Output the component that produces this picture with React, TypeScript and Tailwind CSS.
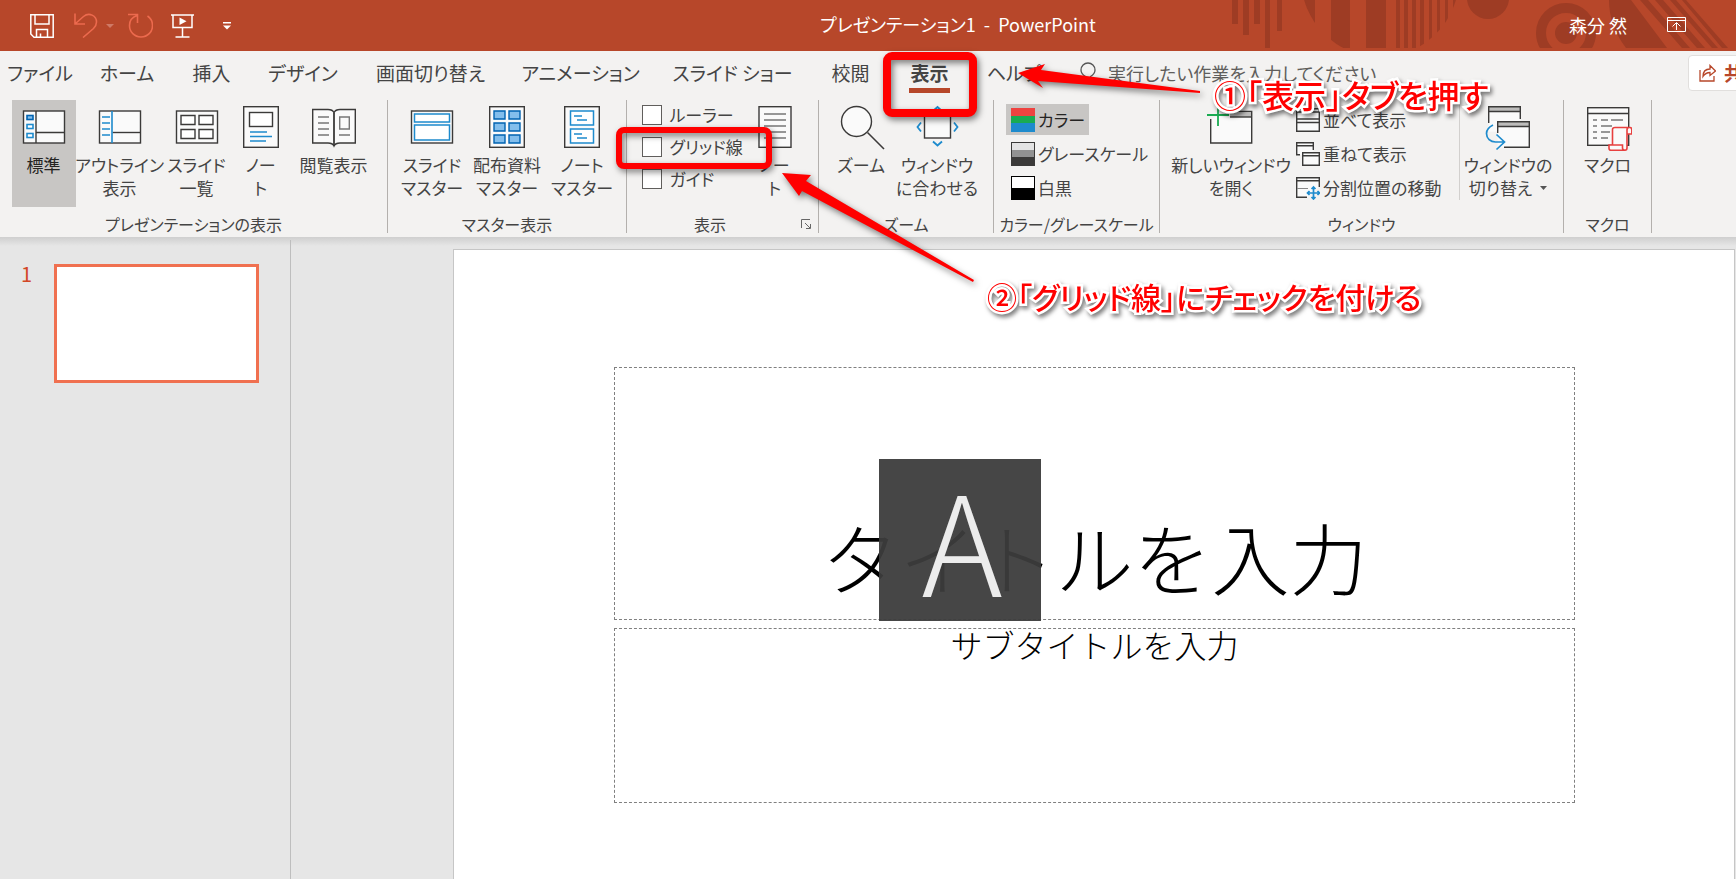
import { useState, type ReactNode } from "react";

const TABS = [
  { label: "ファイル", width: "w-[80px]" },
  { label: "ホーム", width: "w-[94px]" },
  { label: "挿入", width: "w-[75px]" },
  { label: "デザイン", width: "w-[108px]" },
  { label: "画面切り替え", width: "w-[147px]" },
  { label: "アニメーション", width: "w-[153px]" },
  { label: "スライド ショー", width: "w-[151px]" },
  { label: "校閲", width: "w-[85px]" },
  { label: "表示", width: "w-[73px]" },
  { label: "ヘルプ", width: "w-[96px]" },
];

const INK = "#3b3a39";
const BLUE = "#1e8bcd";

const Icon = ({ children }: { children: ReactNode }) => (
  <svg width="48" height="48" viewBox="0 0 48 48" fill="none" className="shrink-0">
    {children}
  </svg>
);

const SmallIcon = ({ children }: { children: ReactNode }) => (
  <svg width="24" height="24" viewBox="0 0 24 24" fill="none" className="shrink-0">
    {children}
  </svg>
);

const NormalIcon = () => (
  <Icon>
    <rect x="3.5" y="8" width="41" height="32" fill="#fafafa" stroke={INK} strokeWidth="1.4" />
    <path d="M16 8v32M16 29.500h28.500" stroke={INK} strokeWidth="1.4" />
    <rect x="7" y="12.500" width="6" height="4" fill="#83beec" stroke="#0063b1" strokeWidth="1.600" />
    <rect x="7" y="21.500" width="6" height="4" fill="#fff" stroke={BLUE} strokeWidth="1.600" />
    <rect x="7" y="30.500" width="6" height="4" fill="#fff" stroke={BLUE} strokeWidth="1.600" />
  </Icon>
);

const OutlineIcon = () => (
  <Icon>
    <rect x="3.500" y="8" width="41" height="32" fill="#fafafa" stroke={INK} strokeWidth="1.400" />
    <path d="M16.500 29.500h28" stroke={INK} strokeWidth="1.400" />
    <path d="M16 8v32M6 14h8M6 20h8M6 26h8M6 32h8" stroke={BLUE} strokeWidth="1.600" />
  </Icon>
);

const SorterIcon = () => (
  <Icon>
    <rect x="3.500" y="8" width="41" height="32" fill="#fafafa" stroke={INK} strokeWidth="1.400" />
    <path
      d="M8 12.500h14v9H8zM26 12.500h14v9H26zM8 26.500h14v9H8zM26 26.500h14v9H26z"
      fill="#fff"
      stroke={INK}
      strokeWidth="1.400"
    />
  </Icon>
);

const NotesIcon = () => (
  <Icon>
    <rect x="6.700" y="3.700" width="34.600" height="40.600" fill="#fafafa" stroke={INK} strokeWidth="1.400" />
    <rect x="12.500" y="9.500" width="23" height="14" fill="#fff" stroke={INK} strokeWidth="1.400" />
    <path d="M13 29h17M13 33.500h22M13 38h16" stroke={BLUE} strokeWidth="1.600" />
  </Icon>
);

const BookIcon = () => (
  <Icon>
    <path
      d="M2.700 6.500H18c3 0 5 1 6 3 1-2 3-3 6-3h15.300v33.500H30c-3 0-5 .8-6 3-1-2.200-3-3-6-3H2.700z"
      fill="#fafafa"
      stroke={INK}
      strokeWidth="1.400"
    />
    <path d="M24 9.500v33" stroke={INK} strokeWidth="1.800" />
    <path d="M8 14h11M8 20h11M8 26h11M8 32h11M29 32h11M29.700 14h9.600v12h-9.600z" stroke="#777" strokeWidth="1.400" />
  </Icon>
);

const SlideMasterIcon = () => (
  <Icon>
    <rect x="3.500" y="8" width="41" height="32" fill="#fafafa" stroke={INK} strokeWidth="1.400" />
    <path d="M6.500 11h35v8h-35zM6.500 22h35v15h-35z" fill="#fff" stroke={BLUE} strokeWidth="1.500" />
  </Icon>
);

const HandoutMasterIcon = () => (
  <Icon>
    <rect x="6.700" y="3.700" width="34.600" height="40.600" fill="#fafafa" stroke={INK} strokeWidth="1.400" />
    <path
      d="M11 8h11v8H11zM26 8h11v8H26zM11 20h11v8H11zM26 20h11v8H26zM11 32h11v8H11zM26 32h11v8H26z"
      fill="#83beec"
      stroke="#0063b1"
      strokeWidth="1.400"
    />
  </Icon>
);

const NotesMasterIcon = () => (
  <Icon>
    <rect x="6.700" y="3.700" width="34.600" height="40.600" fill="#fafafa" stroke={INK} strokeWidth="1.400" />
    <path d="M12.500 8h23v14h-23zM12.500 26h23v14h-23z" fill="#fff" stroke={BLUE} strokeWidth="1.500" />
    <path d="M16 13h8M19 17h10M16 31h8M19 35h10" stroke={BLUE} strokeWidth="1.500" />
  </Icon>
);

const NotePageIcon = () => (
  <Icon>
    <rect x="8" y="3.700" width="32" height="40.600" fill="#fafafa" stroke={INK} strokeWidth="1.400" />
    <path d="M13 11h22M13 17h22M13 23h22M13 29h22M13 35h22" stroke="#777" strokeWidth="1.400" />
  </Icon>
);

const ZoomIcon = () => (
  <Icon>
    <circle cx="19.500" cy="18.500" r="15" fill="#fafafa" stroke={INK} strokeWidth="1.400" />
    <path d="M30.500 29.500L47 46" stroke={INK} strokeWidth="1.600" />
  </Icon>
);

const FitIcon = () => (
  <Icon>
    <rect x="11.500" y="11" width="26" height="24" fill="#fafafa" stroke={INK} strokeWidth="1.400" />
    <path d="M8 19.500L4.500 24 8 28.500M41 19.500L44.500 24 41 28.500M20 38.500l4.500 4 4.500-4M20 8l4.500-4L29 8" stroke={BLUE} strokeWidth="1.800" />
  </Icon>
);

const NewWindowIcon = () => (
  <Icon>
    <path d="M3.700 16v24h41V8.500H22" fill="#fafafa" stroke={INK} strokeWidth="1.400" />
    <path d="M23 9h21v5H23z" fill="#bdbcbb" />
    <path d="M23 14h21.500" stroke={INK} strokeWidth="1.400" />
    <path d="M0 12h22M11 1v22" stroke="#1aab52" strokeWidth="1.800" />
  </Icon>
);

const SwitchIcon = () => (
  <Icon>
    <rect x="4.700" y="3.700" width="31.600" height="25" fill="#fafafa" />
    <rect x="4.700" y="3.700" width="31.600" height="4.300" fill="#bdbcbb" />
    <path d="M4.700 20V3.700h31.600V16M4.700 8.500h31.600" stroke={INK} strokeWidth="1.400" />
    <rect x="13.700" y="18.700" width="31.600" height="25.600" fill="#fafafa" />
    <rect x="13.700" y="18.700" width="31.600" height="4.300" fill="#bdbcbb" />
    <path d="M13.700 30V18.700h31.600v25.600H20M13.700 23.500h31.600" stroke={INK} strokeWidth="1.400" />
    <path d="M9 22c-4 2-6.500 5-6.500 8.500 0 5 4 8.500 9 8.500h8M12.500 31.500l8 7.500-8 7.500" stroke={BLUE} strokeWidth="1.700" />
  </Icon>
);

const MacroIcon = () => (
  <Icon>
    <rect x="3.700" y="4.700" width="41" height="37.600" fill="#fafafa" stroke={INK} strokeWidth="1.400" />
    <path d="M3.700 10.500h41" stroke={INK} strokeWidth="1.400" />
    <path d="M9 17h4M17 17h7M27 17h12M9 23h4M17 23h11M9 29h4M17 29h9M9 35h4M17 35h7" stroke="#777" strokeWidth="1.400" />
    <path
      d="M28.500 42V26.500c0-1.500 1-2 2.500-2h15c1.200 0 1.800 1 1.800 2.500v4H43v14c0 1.500-.8 2.200-2 2.200H27c-1.200 0-2-.8-2-2V42h13.500v3c0 1.500 1 2 2.200 2M43 31v-4c0-1.500.8-2.500 2-2.500"
      fill="#fafafa"
      stroke="#e8403f"
      strokeWidth="1.600"
    />
  </Icon>
);

const RibbonButton = ({
  icon,
  lines,
  width,
  active = false,
  arrow = false,
}: {
  icon: ReactNode;
  lines: string[];
  width: string;
  active?: boolean;
  arrow?: boolean;
}) => (
  <button
    className={`flex h-[107px] shrink-0 flex-col items-center pt-[3px] text-[17px] leading-[23px] whitespace-nowrap ${width} ${
      active ? "bg-[#c8c6c4] text-[#252423]" : ""
    }`}
  >
    {icon}
    <span className="mt-0.5 flex flex-col items-center">
      {lines.map((line, i) => (
        <span key={i} className="flex items-center gap-2">
          {line}
          {arrow && i === lines.length - 1 && (
            <svg width="7" height="4" viewBox="0 0 7 4">
              <path d="M0 0h7L3.500 4z" fill="#555" />
            </svg>
          )}
        </span>
      ))}
    </span>
  </button>
);

const RowButton = ({ icon, label, active = false }: { icon: ReactNode; label: string; active?: boolean }) => (
  <button
    className={`flex h-[31px] items-center gap-[3px] self-start pl-[5px] text-[17px] whitespace-nowrap ${
      active ? "bg-[#c8c6c4] pr-1 text-[#252423]" : ""
    }`}
  >
    {icon}
    {label}
  </button>
);

const Group = ({
  label,
  width,
  launcher = false,
  children,
}: {
  label: string;
  width: string;
  launcher?: boolean;
  children: ReactNode;
}) => (
  <section className={`flex h-[133px] shrink-0 flex-col border-r border-[#b3b0ad] ${width}`}>
    <div className="flex h-[115px] shrink-0 justify-center">{children}</div>
    <div className={`flex h-[18px] items-center text-[16px] leading-[18px] whitespace-nowrap ${launcher ? "pr-1.5" : ""}`}>
      <span className={`flex-1 text-center ${launcher ? "pr-2" : ""}`}>{label}</span>
      {launcher && (
        <button aria-label="表示オプション">
          <svg width="11" height="11" viewBox="0 0 11 11" fill="none" stroke="#666">
            <path d="M.5 9V.500H9M4 4l5 5M9.500 5v4.500H5" />
          </svg>
        </button>
      )}
    </div>
  </section>
);

const TitleDecoration = () => (
  <svg className="absolute top-0 right-0" width="511" height="48" viewBox="1225 0 511 48" fill="#9e3c24">
    <defs>
      <clipPath id="disc">
        <circle cx="1380" cy="-22" r="79" />
      </clipPath>
    </defs>
    <path d="M1232 0h6v24h-6zM1243 0h6v35h-6zM1254 0h6v24h-6zM1265 0h5v48h-5zM1277 0h5v31h-5z" />
    <path
      clipPath="url(#disc)"
      d="M1300 0h15v48h-15zM1331 0h19v48h-19zM1366 0h20v48h-20zM1396 0h4v48h-4zM1404 0h4v48h-4zM1412 0h4v48h-4zM1420 0h4v48h-4zM1429 0h3v48h-3zM1437 0h3v48h-3zM1445 0h3v48h-3zM1453 0h5v48h-5z"
    />
    <circle cx="1488" cy="-2" r="21" />
    <circle cx="1566" cy="33" r="25" fill="none" stroke="#9e3c24" strokeWidth="10" />
    <circle cx="1566" cy="33" r="11" />
    <path d="M1609 0h22l36 48h-41q-17-22-17-48zM1640 0h8l42 48h-8zM1655 0h8l42 48h-8zM1670 0h6l42 48h-6zM1682 0h4l42 48h-6z" />
  </svg>
);

const TitleBar = () => (
  <header className="relative flex h-[51px] items-center bg-[#b7472a] text-white">
    <TitleDecoration />
    <div className="relative flex w-[347px] shrink-0 items-center pl-[30px]">
      <button aria-label="上書き保存">
        <svg width="24" height="24" viewBox="0 0 24 24" fill="none" stroke="#fff" strokeWidth="1.500">
          <path d="M.8.800h22.400v22.400H4L.8 20zM5 1v9h14V1M6.500 23v-7.500h11V23M10.500 23v-3.500" />
        </svg>
      </button>
      <button aria-label="元に戻す" className="ml-5">
        <svg width="24" height="25" viewBox="0 0 24 25" fill="none" stroke="#ec6a4e" strokeWidth="1.600">
          <path d="M1 .500V11h10M1.500 10.500L9.500 3.500C15-1 22.500 2.500 22.500 9c0 3-1.500 5-3 6.500L9 24.500" />
        </svg>
      </button>
      <svg className="ml-2" width="8" height="4" viewBox="0 0 8 4">
        <path d="M0 0h8L4 4z" fill="#cf7a66" />
      </svg>
      <button aria-label="やり直し" className="ml-[14px]">
        <svg width="25" height="25" viewBox="0 0 25 25" fill="none" stroke="#ec6a4e" strokeWidth="1.600">
          <path d="M0 1.500h9.500V10M9 2.500C4.500 4 1.500 8 1.500 12.500c0 6.500 5 11.500 11.500 11.500s11.500-5 11.500-11.500c0-4-2-7.500-5-9.500" />
        </svg>
      </button>
      <button aria-label="スライド ショー" className="ml-[18px]">
        <svg width="23" height="24" viewBox="0 0 23 24" fill="none" stroke="#fff" strokeWidth="1.500">
          <path d="M0 1h23M2 1v12.500h19V1M11.500 14v8.500M4.500 23h14" />
          <path d="M8.500 3.500v7.500l7-3.700z" fill="#fff" stroke="none" />
        </svg>
      </button>
      <button aria-label="カスタマイズ" className="ml-[29px]">
        <svg width="8" height="8" viewBox="0 0 8 8" fill="#fff">
          <path d="M0 0h8v1.500H0zM0 3.500h8L4 7.500z" />
        </svg>
      </button>
    </div>
    <h1 className="relative min-w-0 flex-1 pb-1 text-center text-[18px] leading-6 whitespace-pre">
      プレゼンテーション1{"  -  "}PowerPoint
    </h1>
    <div className="relative flex w-[167px] shrink-0 items-center gap-[40px] pb-0.5">
      <span className="text-[18px] leading-6 whitespace-nowrap">森分 然</span>
      <button aria-label="リボンの表示オプション">
        <svg width="19" height="15" viewBox="0 0 19 15" fill="none" stroke="#fff">
          <path d="M.500.500h18v14H.500zM.500 3.500h18M9.500 13V6M5.500 9.500l4-4 4 4" />
        </svg>
      </button>
    </div>
  </header>
);

const TabBar = () => (
  <nav className="flex h-[49px] overflow-hidden">
    {TABS.map((tab) => (
      <button
        key={tab.label}
        className={`flex h-[44px] shrink-0 flex-col items-center text-[19px] leading-[37px] whitespace-nowrap ${tab.width} ${
          tab.label === "表示" ? "font-bold" : ""
        }`}
      >
        <span className="pt-[3px]">{tab.label}</span>
        {tab.label === "表示" && <span className="-mt-[3px] h-[5px] w-[41px] shrink-0 bg-[#b7472a]" />}
      </button>
    ))}
    <label className="flex h-[44px] min-w-0 flex-1 items-center pl-[18px]">
      <svg width="16" height="22" viewBox="0 0 16 22" fill="none" stroke="#555" strokeWidth="1.300" className="mr-3">
        <path d="M5.500 18v-3.500C3 13 1 11 1 8a7 7 0 0 1 14 0c0 3-2 5-4.500 6.500V18zM5.500 21h5" />
      </svg>
      <input
        aria-label="操作アシスト"
        placeholder="実行したい作業を入力してください"
        className="w-[300px] bg-transparent text-[18px] outline-none placeholder:text-[#605e5c]"
      />
    </label>
    <div className="w-[48px] shrink-0 overflow-hidden pt-1">
      <button className="flex h-[36px] w-[104px] items-center gap-2 rounded border border-[#e1dfdd] bg-white pl-[10px] text-[19px] font-bold whitespace-nowrap text-[#b7472a]">
        <svg width="17" height="18" viewBox="0 0 17 18" fill="none" stroke="#b7472a" strokeWidth="1.300" className="shrink-0">
          <path d="M1 6v11h14v-5M4 12.500c0-5 3-7.500 7-7.500V1.500L16.500 7 11 11.500V8.500c-3 0-5 1-7 4z" />
        </svg>
        共有
      </button>
    </div>
  </nav>
);

const Ribbon = () => {
  const [checked, setChecked] = useState<string[]>([]);

  const toggle = (name: string) => {
    setChecked(checked.includes(name) ? checked.filter((c) => c !== name) : [...checked, name]);
  };

  return (
    <div className="flex h-[137px] overflow-hidden">
      <Group label="プレゼンテーションの表示" width="w-[388px]">
        <RibbonButton icon={<NormalIcon />} lines={["標準"]} width="w-[64px]" active />
        <RibbonButton icon={<OutlineIcon />} lines={["アウトライン", "表示"]} width="w-[88px]" />
        <RibbonButton icon={<SorterIcon />} lines={["スライド", "一覧"]} width="w-[66px]" />
        <RibbonButton icon={<NotesIcon />} lines={["ノー", "ト"]} width="w-[62px]" />
        <RibbonButton icon={<BookIcon />} lines={["閲覧表示"]} width="w-[84px]" />
      </Group>
      <Group label="マスター表示" width="w-[239px]">
        <RibbonButton icon={<SlideMasterIcon />} lines={["スライド", "マスター"]} width="w-[70px]" />
        <RibbonButton icon={<HandoutMasterIcon />} lines={["配布資料", "マスター"]} width="w-[80px]" />
        <RibbonButton icon={<NotesMasterIcon />} lines={["ノート", "マスター"]} width="w-[70px]" />
      </Group>
      <Group label="表示" width="w-[192px]" launcher>
        <div className="flex w-[110px] flex-col gap-3 pt-[5px]">
          {["ルーラー", "グリッド線", "ガイド"].map((name) => (
            <label key={name} className="flex h-5 items-center gap-2 text-[17px] whitespace-nowrap">
              <input
                type="checkbox"
                checked={checked.includes(name)}
                onChange={() => toggle(name)}
                className="h-5 w-5 shrink-0 appearance-none border border-[#605e5c] bg-white checked:bg-[#b7472a]"
              />
              {name}
            </label>
          ))}
        </div>
        <RibbonButton icon={<NotePageIcon />} lines={["ノー", "ト"]} width="mr-1.5 w-[46px]" />
      </Group>
      <Group label="ズーム" width="w-[175px]">
        <RibbonButton icon={<ZoomIcon />} lines={["ズーム"]} width="w-[62px]" />
        <RibbonButton icon={<FitIcon />} lines={["ウィンドウ", "に合わせる"]} width="w-[90px]" />
      </Group>
      <Group label="カラー/グレースケール" width="w-[166px]">
        <div className="flex flex-1 flex-col gap-[3px] pt-1 pl-3">
          <RowButton
            active
            label="カラー"
            icon={
              <SmallIcon>
                <path d="M0 0h24v8H0z" fill="#ef4340" />
                <path d="M0 8h24v8H0z" fill="#1aab52" />
                <path d="M0 15h24v9H0z" fill={BLUE} />
              </SmallIcon>
            }
          />
          <RowButton
            label="グレースケール"
            icon={
              <SmallIcon>
                <path d="M0 0h24v24H0z" fill={INK} />
                <path d="M1 1h22v7H1z" fill="#e3e3e3" />
                <path d="M1 8h22v7H1z" fill="#929292" />
              </SmallIcon>
            }
          />
          <RowButton
            label="白黒"
            icon={
              <SmallIcon>
                <path d="M0 0h24v24H0z" fill="#000" />
                <path d="M1 1h22v11H1z" fill="#fff" />
              </SmallIcon>
            }
          />
        </div>
      </Group>
      <Group label="ウィンドウ" width="w-[404px]">
        <RibbonButton icon={<NewWindowIcon />} lines={["新しいウィンドウ", "を開く"]} width="ml-1 w-[120px]" />
        <div className="flex w-[168px] flex-col gap-[3px] pt-1">
          <RowButton
            label="並べて表示"
            icon={
              <SmallIcon>
                <path d="M.7.700h22.600v22.600H.7zM.7 4h22.600M.7 11h22.600M.7 14.500h22.600" fill="#fafafa" stroke={INK} strokeWidth="1.400" />
              </SmallIcon>
            }
          />
          <RowButton
            label="重ねて表示"
            icon={
              <SmallIcon>
                <path d="M.7.700h16.600v12H.7z" fill="#fafafa" />
                <path d="M4 12.700H.7V.700h16.600V8M.7 3.700h16.600" stroke={INK} strokeWidth="1.400" />
                <path d="M6.700 10.700h16.600v12.600H6.700zM6.700 13.700h16.600" fill="#fafafa" stroke={INK} strokeWidth="1.400" />
              </SmallIcon>
            }
          />
          <RowButton
            label="分割位置の移動"
            icon={
              <SmallIcon>
                <path d="M11 21.300H.7V1.700h22.600V11M.7 4.700h22.600" fill="#fafafa" stroke={INK} strokeWidth="1.400" />
                <path d="M1 12.500h11" stroke="#888" />
                <path d="M17.500 11v12M11.500 17h12M15.500 13l2-2 2 2M15.500 21l2 2 2-2M13.500 15l-2 2 2 2M21.500 15l2 2-2 2" stroke={BLUE} strokeWidth="1.700" />
              </SmallIcon>
            }
          />
        </div>
        <div className="h-[100px] w-px bg-[#d2d0ce]" />
        <RibbonButton icon={<SwitchIcon />} lines={["ウィンドウの", "切り替え"]} width="w-[96px]" arrow />
      </Group>
      <Group label="マクロ" width="w-[88px]">
        <RibbonButton icon={<MacroIcon />} lines={["マクロ"]} width="w-[72px]" />
      </Group>
    </div>
  );
};

const Workspace = () => (
  <main className="flex flex-1 bg-[#e6e6e6] bg-[linear-gradient(#cfcfcf,#e6e6e6_9px)]">
    <aside className="mt-[3px] flex w-[291px] shrink-0 gap-[22px] border-r border-[#bebebe] pt-6 pl-[21px]">
      <span className="text-[20px] leading-5 text-[#d24726]">1</span>
      <button aria-label="スライド 1" className="h-[119px] w-[205px] border-3 border-[#f07050] bg-white" />
    </aside>
    <section className="mt-3 mr-px ml-[162px] flex min-w-0 flex-1 flex-col gap-2 border-x border-t border-[#c6c6c6] bg-white pt-[117px] pr-[159px] pl-40 text-black [font-feature-settings:normal]">
      <div className="relative flex h-[253px] items-end justify-center border border-dashed border-[#808080] text-[78px] leading-[126px] font-extralight whitespace-nowrap">
        タイトルを入力
        {/* IME mode indicator */}
        <div className="absolute top-[91px] left-[264px] flex h-[162px] w-[162px] items-center justify-center bg-[#3c3c3c]/95 pb-1.5 pl-1 text-[138px] leading-[156px] font-light text-[#ececec]">
          A
        </div>
      </div>
      <div className="h-[175px] border border-dashed border-[#808080] text-center text-[32px] leading-[30px] font-light">
        サブタイトルを入力
      </div>
    </section>
  </main>
);

const Callout = ({ className, children }: { className: string; children: string }) => (
  <p
    className={`absolute leading-9 font-medium whitespace-nowrap text-[#ff0000] [paint-order:stroke_fill] [-webkit-text-stroke:5px_white] drop-shadow-[2px_3px_2px_rgba(0,0,0,0.5)] ${className}`}
  >
    {children}
  </p>
);

const Annotations = () => (
  <div className="pointer-events-none absolute inset-0 overflow-hidden">
    <div className="absolute top-[52px] left-[883px] h-[65px] w-[94px] rounded-[9px] border-8 border-[#ff0000] drop-shadow-[2px_3px_3px_rgba(0,0,0,0.5)]" />
    <div className="absolute top-[127px] left-[616px] h-[42px] w-[156px] rounded-[8px] border-[6px] border-[#ff0000] drop-shadow-[2px_3px_3px_rgba(0,0,0,0.5)]" />
    <svg
      className="absolute top-0 left-0 drop-shadow-[2px_3px_3px_rgba(0,0,0,0.5)]"
      width="1210"
      height="300"
      viewBox="0 0 1210 300"
      fill="#ff0000"
    >
      <path d="M1018 73L1045 64L1041 70L1200 91V93L1038 81L1043 88Z" />
      <path d="M782 173L811 175L806 181L974 280L973 282L802 191L799 196Z" />
    </svg>
    <Callout className="top-[76px] left-[1214px] text-[32px]">①「表示」タブを押す</Callout>
    <Callout className="top-[278px] left-[987px] text-[30px]">②「グリッド線」にチェックを付ける</Callout>
  </div>
);

const App = () => {
  return (
    <div className="relative flex min-h-screen flex-col overflow-hidden bg-[#f3f2f1] font-['Noto_Sans_CJK_JP','Noto_Sans',sans-serif] text-[#444] [font-feature-settings:'palt']">
      <TitleBar />
      <TabBar />
      <Ribbon />
      <Workspace />
      <Annotations />
    </div>
  );
};

export default App;
